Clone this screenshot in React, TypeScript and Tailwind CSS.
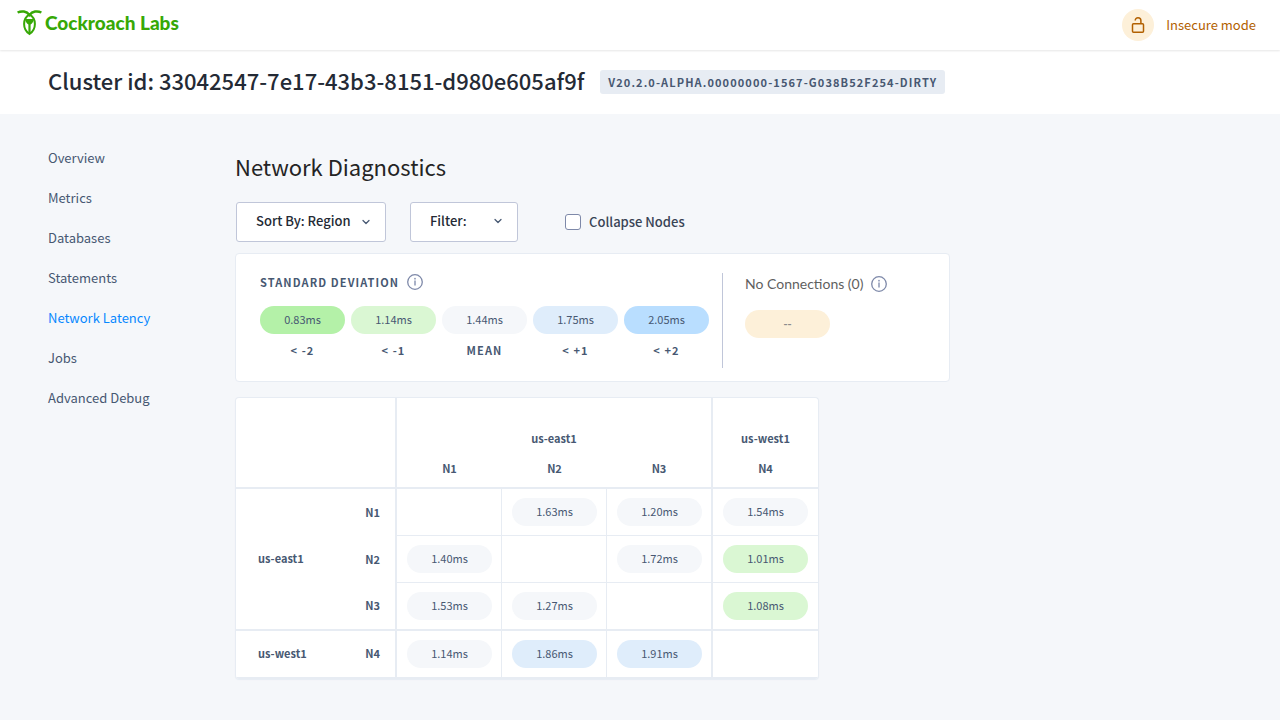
import { ChevronDown } from "lucide-react";

type Level = "low2" | "low1" | "mean" | "high1" | "high2" | "none";

const levelClass: Record<Level, string> = {
  low2: "bg-[#b4f1a8] text-[#475872]",
  low1: "bg-[#daf7d3] text-[#475872]",
  mean: "bg-[#f5f7fa] text-[#475872]",
  high1: "bg-[#dfedfb] text-[#475872]",
  high2: "bg-[#b9deff] text-[#475872]",
  none: "bg-[#fdf0d9] font-bold text-[#8c8c8c]",
};

const navItems = [
  "Overview",
  "Metrics",
  "Databases",
  "Statements",
  "Network Latency",
  "Jobs",
  "Advanced Debug",
];

const legend: { value: string; label: string; level: Level }[] = [
  { value: "0.83ms", label: "< -2", level: "low2" },
  { value: "1.14ms", label: "< -1", level: "low1" },
  { value: "1.44ms", label: "MEAN", level: "mean" },
  { value: "1.75ms", label: "< +1", level: "high1" },
  { value: "2.05ms", label: "< +2", level: "high2" },
];

type Cell = { value: string; level: Level } | null;

const rows: { node: string; region?: string; span?: number; last: boolean; cells: Cell[] }[] = [
  {
    node: "N1",
    region: "us-east1",
    span: 3,
    last: false,
    cells: [
      null,
      { value: "1.63ms", level: "mean" },
      { value: "1.20ms", level: "mean" },
      { value: "1.54ms", level: "mean" },
    ],
  },
  {
    node: "N2",
    last: false,
    cells: [
      { value: "1.40ms", level: "mean" },
      null,
      { value: "1.72ms", level: "mean" },
      { value: "1.01ms", level: "low1" },
    ],
  },
  {
    node: "N3",
    last: true,
    cells: [
      { value: "1.53ms", level: "mean" },
      { value: "1.27ms", level: "mean" },
      null,
      { value: "1.08ms", level: "low1" },
    ],
  },
  {
    node: "N4",
    region: "us-west1",
    span: 1,
    last: true,
    cells: [
      { value: "1.14ms", level: "mean" },
      { value: "1.86ms", level: "high1" },
      { value: "1.91ms", level: "high1" },
      null,
    ],
  },
];

const columnBorder = ["border-r", "border-r", "border-r-2", ""];

function Chip({ value, level }: { value: string; level: Level }) {
  return (
    <span
      className={`flex h-7 w-[85px] items-center justify-center rounded-full pb-0.5 text-[11px] leading-4 ${levelClass[level]}`}
    >
      {value}
    </span>
  );
}

function InfoIcon() {
  return (
    <svg viewBox="0 0 16 16" className="size-4 shrink-0" fill="none" aria-hidden="true">
      <circle cx="8" cy="8" r="7.3" stroke="#7e89a9" strokeWidth="1.3" />
      <path d="M8 6.6v5" stroke="#8d97b5" strokeWidth="1.5" />
      <circle cx="8" cy="4.7" r="0.9" fill="#8d97b5" />
    </svg>
  );
}

function Logo() {
  return (
    <a href="#" className="flex items-center gap-[3px] text-[#37a806]" aria-label="Cockroach Labs">
      <svg viewBox="0 0 25 26" className="h-[26px] w-[25px]" fill="none" aria-hidden="true">
        <path
          d="M0.6 2.5C4.6 0.5 9.6 1.2 12.5 5C15.4 1.2 20.4 0.5 24.4 2.5"
          stroke="currentColor"
          strokeWidth="2.5"
        />
        <path
          d="M12.5 4.6C8.8 6.5 7.1 9.9 7.1 14C7.1 18.4 8.9 21.7 12.5 24C16.1 21.7 17.9 18.4 17.9 14C17.9 9.9 16.2 6.5 12.5 4.6Z"
          stroke="currentColor"
          strokeWidth="2"
        />
        <path
          d="M8 8.2C10.8 9.4 14.2 9.4 17 8.2C16.8 11.4 15.6 13.2 13.6 14.6V23.4H11.4V14.6C9.4 13.2 8.2 11.4 8 8.2Z"
          fill="currentColor"
        />
      </svg>
      <span className="font-['Lato',sans-serif]">
        <span className="text-[19px] leading-6 font-black">Cockroach Labs</span>
      </span>
    </a>
  );
}

function OpenLock() {
  return (
    <svg viewBox="0 0 14 18" className="h-[18px] w-3.5" fill="none" stroke="#b26000" strokeWidth="1.5" aria-hidden="true">
      <rect x="1.5" y="7.7" width="11" height="8.6" rx="1" />
      <path d="M4.2 4.6C4.2 2.8 5.4 1.7 7 1.7S9.9 2.9 9.9 4.6V7.7" />
    </svg>
  );
}

export default function App() {
  return (
    <div className="min-h-screen bg-[#f5f7fa] font-['Noto_Sans_CJK_SC','Noto_Sans',sans-serif] text-[#475872]">
      <header className="relative flex h-[50px] items-center justify-between bg-white pr-6 pl-[17px] shadow-[0_1px_2px_rgba(0,0,0,0.1)]">
        <div className="pb-1">
          <Logo />
        </div>
        <div className="flex items-center gap-3 text-[#b26000]">
          <span className="flex size-8 items-center justify-center rounded-full bg-[#fdf0d9]">
            <OpenLock />
          </span>
          <span className="text-[13px] leading-5">Insecure mode</span>
        </div>
      </header>

      <div className="flex h-16 items-center gap-4 bg-white px-12">
        <h1 className="pb-1 text-[22px] leading-8 font-medium text-[#242a35]">
          Cluster id: 33042547-7e17-43b3-8151-d980e605af9f
        </h1>
        <span className="flex h-6 items-center rounded-[3px] bg-[#e7ecf3] px-2 text-[11px] font-bold tracking-widest uppercase">
          v20.2.0-alpha.00000000-1567-g038b52f254-dirty
        </span>
      </div>

      <div className="flex px-12">
        <nav className="w-[187px] shrink-0 pt-[34px]">
          <ul className="flex flex-col gap-5">
            {navItems.map((item) => (
              <li key={item} className="flex">
                <a
                  href="#"
                  className={`text-[13px] leading-5 ${item === "Network Latency" ? "text-[#0788ff]" : ""}`}
                >
                  {item}
                </a>
              </li>
            ))}
          </ul>
        </nav>

        <main className="pt-9 pb-10">
          <h2 className="text-[22px] leading-8 text-[#242424]">Network Diagnostics</h2>

          <div className="mt-5 flex items-center pl-px">
            <div className="relative">
              <select
                aria-label="Sort by"
                className="h-10 w-[150px] appearance-none rounded-[3px] border border-[#c0c6d9] bg-white pb-0.5 pl-[19px] text-[13px] font-medium text-[#242a35]"
              >
                <option>Sort By: Region</option>
              </select>
              <ChevronDown className="pointer-events-none absolute top-3.5 right-3.5 size-3" strokeWidth={2.5} />
            </div>
            <button
              type="button"
              className="ml-6 flex h-10 w-[108px] items-center justify-between rounded-[3px] border border-[#c0c6d9] bg-white pr-[13px] pb-0.5 pl-[19px] text-[13px] font-medium text-[#242a35]"
            >
              Filter:
              <ChevronDown className="size-3 text-[#475872]" strokeWidth={2.5} />
            </button>
            <label className="ml-[47px] flex items-center gap-2 text-[13px] leading-5 font-medium text-[#394455]">
              <input
                type="checkbox"
                className="size-4 appearance-none rounded-[3px] border border-[#7e89a9] bg-white checked:bg-[#0788ff]"
              />
              Collapse Nodes
            </label>
          </div>

          <section className="mt-[11px] flex w-[715px] rounded-[4px] border border-[#e7ecf3] bg-white px-6 pt-[19px] pb-[13px]">
            <div className="border-r border-[#c0c6d9] pr-[13px]">
              <div className="flex h-[18px] items-center gap-2 text-[11px] leading-4 font-bold tracking-widest">
                <h3>STANDARD DEVIATION</h3>
                <InfoIcon />
              </div>
              <ul className="mt-[15px] flex gap-1.5 pb-2.5">
                {legend.map((item) => (
                  <li key={item.label} className="flex flex-col items-center gap-2">
                    <Chip value={item.value} level={item.level} />
                    <span className="text-[11px] leading-4 font-bold tracking-widest">{item.label}</span>
                  </li>
                ))}
              </ul>
            </div>
            <div className="pl-[22px]">
              <div className="flex h-[22px] items-center gap-2">
                <h3 className="font-['Lato',sans-serif] text-[14px] leading-5 text-[#5f5f5f]">No Connections (0)</h3>
                <InfoIcon />
              </div>
              <div className="mt-[15px]">
                <Chip value="--" level="none" />
              </div>
            </div>
          </section>

          <div className="mt-[15px] w-fit overflow-hidden rounded-[4px] border border-b-0 border-[#e7ecf3] bg-white shadow-[0_1px_1px_#e7ecf3]">
            <table className="w-[582px] table-fixed border-separate border-spacing-0 text-[11px] leading-4">
              <colgroup>
                <col className="w-[105px]" />
                <col className="w-14" />
                <col className="w-[105px]" />
                <col className="w-[105px]" />
                <col className="w-[106px]" />
                <col className="w-[105px]" />
              </colgroup>
              <thead className="align-top font-bold">
                <tr className="h-[55px]">
                  <td colSpan={2} rowSpan={2} className="border-r-2 border-b-2 border-[#e7ecf3]" />
                  <th colSpan={3} scope="colgroup" className="border-r-2 border-[#e7ecf3] pt-8">
                    us-east1
                  </th>
                  <th scope="colgroup" className="pt-8">
                    us-west1
                  </th>
                </tr>
                <tr className="h-9">
                  {["N1", "N2", "N3", "N4"].map((node) => (
                    <th
                      key={node}
                      scope="col"
                      className={`border-b-2 border-[#e7ecf3] pt-[7px] ${node === "N3" ? "border-r-2" : ""}`}
                    >
                      {node}
                    </th>
                  ))}
                </tr>
              </thead>
              <tbody>
                {rows.map((row) => (
                  <tr key={row.node} className={row.last ? "h-12" : "h-[47px]"}>
                    {row.region && (
                      <th
                        scope="rowgroup"
                        rowSpan={row.span}
                        className="border-b-2 border-[#e7ecf3] pb-0.5 pl-[22px] text-left font-bold"
                      >
                        {row.region}
                      </th>
                    )}
                    <th
                      scope="row"
                      className={`border-r-2 border-[#e7ecf3] pr-[15px] pb-0.5 text-right font-bold ${row.last ? "border-b-2" : ""}`}
                    >
                      {row.node}
                    </th>
                    {row.cells.map((cell, i) => (
                      <td
                        key={i}
                        className={`border-[#e7ecf3] pl-2.5 ${columnBorder[i]} ${row.last ? "border-b-2" : "border-b"}`}
                      >
                        {cell && <Chip value={cell.value} level={cell.level} />}
                      </td>
                    ))}
                  </tr>
                ))}
              </tbody>
            </table>
          </div>
        </main>
      </div>
    </div>
  );
}
